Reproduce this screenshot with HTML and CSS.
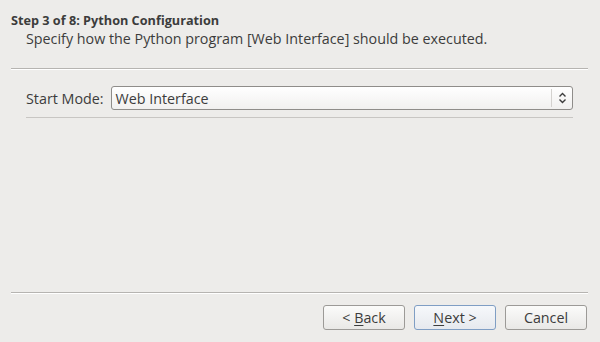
FILE: index.html
```html
<!DOCTYPE html>
<html lang="en">
<head>
    <meta charset="UTF-8">
    <title>Python Configuration</title>
    <link rel="stylesheet" href="styles.css">
</head>
<body>
    <div class="wizard">
        <div class="header">
            <div class="step-title">Step 3 of 8: Python Configuration</div>
            <div class="step-desc">Specify how the Python program [Web Interface] should be executed.</div>
        </div>
        <hr class="sep">

        <div class="content">
            <div class="field">
                <label for="start-mode">Start Mode:</label>
                <div class="combo" id="start-mode">
                    <span class="combo-text">Web Interface</span>
                    <span class="combo-arrow">
                        <svg width="9" height="12" viewBox="0 0 9 12">
                            <path d="M1.5 4.5 L4.5 1.5 L7.5 4.5 M1.5 7.5 L4.5 10.5 L7.5 7.5" fill="none" stroke="#3c3c3c" stroke-width="1.4"/>
                        </svg>
                    </span>
                </div>
            </div>
            <div class="field-line"></div>
        </div>

        <!-- Footer -->
        <hr class="sep">
        <div class="buttons">
            <button><span>&lt; <u>B</u>ack</span></button>
            <button class="default"><span><u>N</u>ext &gt;</span></button>
            <button><span>Cancel</span></button>
        </div>
    </div>
</body>
</html>
```

FILE: styles.css
```css
/* General Styles */
body {
    margin: 0;
    background: #edecea;
    font-family: 'Open Sans', 'DejaVu Sans', sans-serif;
    font-size: 14.3px;
    color: #3c3c3c;
}

.wizard {
    height: 342px;
    display: flex;
    flex-direction: column;
    padding: 0 12px 0 11px;
    box-sizing: border-box;
}

.header {
    padding-top: 11px;
    height: 68px;
    box-sizing: border-box;
}

.step-title {
    font-weight: bold;
    font-size: 12.7px;
    line-height: 18px;
}

.step-desc {
    padding-left: 15px;
    line-height: 20px;
}

.sep {
    margin: 0;
    border: none;
    border-top: 1px solid #b6b4b1;
    border-bottom: 1px solid #ffffff;
}

/* Content */
.content {
    flex: 1;
    padding: 16px 15px 0 15px;
}

.field {
    display: flex;
    align-items: center;
    gap: 7px;
}

.combo {
    flex: 1;
    height: 24px;
    box-sizing: border-box;
    border: 1px solid #8f8d8a;
    border-radius: 3px;
    background: linear-gradient(#ffffff, #f1f0ef);
    display: flex;
    align-items: center;
}

.combo-text {
    flex: 1;
    padding-left: 4px;
}

.combo-arrow {
    width: 20px;
    height: 18px;
    border-left: 1px solid #d4d2cf;
    display: flex;
    align-items: center;
    justify-content: center;
}

.field-line {
    margin-top: 7px;
    border-top: 1px solid #c8c6c3;
}

/* Button Styles */
.buttons {
    display: flex;
    justify-content: flex-end;
    gap: 9px;
    padding: 11px 1px 12px 0;
}

button {
    width: 82px;
    height: 25px;
    font-family: inherit;
    font-size: 14.3px;
    color: #3c3c3c;
    border: 1px solid #9c9a97;
    border-radius: 3px;
    background: linear-gradient(#fbfbfa, #e9e8e6);
    padding: 0;
}

button.default {
    border-color: #7f9ec4;
    background: linear-gradient(#f6f8fb, #e6e9ee);
}

button u {
    text-underline-offset: 2px;
}
```
